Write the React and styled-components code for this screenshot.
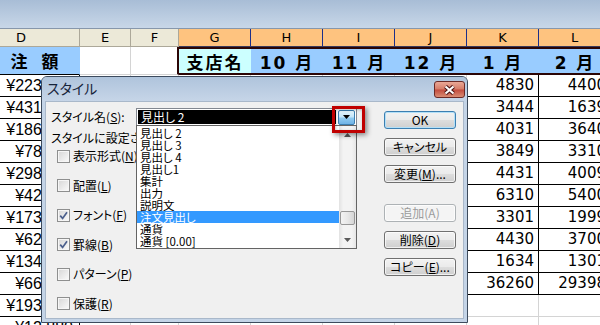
import React from 'react';
import styled, { createGlobalStyle } from 'styled-components';

const GlobalStyle = createGlobalStyle`
  html, body {
    margin: 0;
    padding: 0;
    background: #fff;
  }
  body {
    width: 600px;
    height: 325px;
    overflow: hidden;
  }
`;

const uiFont = `"Noto Sans CJK JP", sans-serif`;
const sheetFont = `"DejaVu Sans", "Noto Sans CJK JP", sans-serif`;

const columns = ['D', 'E', 'F', 'G', 'H', 'I', 'J', 'K', 'L'];

const orders = [
  '¥223,150', '¥431,800', '¥186,420', '¥78,360', '¥298,740', '¥42,580',
  '¥173,900', '¥62,210', '¥134,650', '¥66,470', '¥193,320', '¥12,880',
];
const january = [4830, 3444, 4031, 3849, 4431, 6310, 3301, 4430, 1634, 36260];
const february = [4400, 1639, 3640, 3310, 4009, 5400, 1999, 3700, 1301, 29398];

const styleNames = [
  '見出し 2', '見出し 3', '見出し 4', '見出し1', '集計', '出力',
  '説明文', '注文見出し', '通貨', '通貨 [0.00]',
];

const checks = [
  { label: '表示形式', key: 'N', on: false },
  { label: '配置', key: 'L', on: false },
  { label: 'フォント', key: 'F', on: true },
  { label: '罫線', key: 'B', on: true },
  { label: 'パターン', key: 'P', on: false },
  { label: '保護', key: 'R', on: false },
];

const tableLine = '1px solid #000';
const gridLine = '1px solid #d4d4d4';
const frameLine = '2px solid #2b0505';

export default function App() {
  return (
    <Root>
      <GlobalStyle />
      <TopBand />
      <Sheet>
        {columns.map((c, i) => (
          <ColHead key={c} $sel={i >= 3}>{c}</ColHead>
        ))}

        <TitleCell $bg="#99ccff" $spacing={4} $right="1px solid #99ccff" $bottom={tableLine}>
          受 注 額
        </TitleCell>
        <TitleCell $right={gridLine} $bottom={gridLine} />
        <TitleCell $right={frameLine} $bottom={gridLine} />
        <TitleCell $bg="#ccffff" $spacing={2} $top={frameLine} $bottom={frameLine}>
          支店名
        </TitleCell>
        {['10 月', '11 月', '12 月', '1 月', '2 月'].map((m) => (
          <TitleCell key={m} $bg="#99ccff" $spacing={2} $top={frameLine} $bottom={frameLine}>
            {m}
          </TitleCell>
        ))}

        {orders.map((o, r) => (
          <React.Fragment key={r}>
            <Num $yen $line={tableLine}>{o}</Num>
            {[0, 1, 2, 3, 4, 5].map((k) => (
              <Num key={k} $line={gridLine} />
            ))}
            <Num $line={r < 10 ? tableLine : gridLine}>{january[r]}</Num>
            <Num $line={r < 10 ? tableLine : gridLine}>{february[r]}</Num>
          </React.Fragment>
        ))}
      </Sheet>

      <Dialog>
        <TitleBar>
          <TitleText>スタイル</TitleText>
          <CloseButton>
            <svg width="13" height="10" viewBox="0 0 13 10">
              <path d="M2.5 1.5 L10.5 8.5 M10.5 1.5 L2.5 8.5" stroke="#4a1414" strokeWidth="4.2" />
              <path d="M2.5 1.5 L10.5 8.5 M10.5 1.5 L2.5 8.5" stroke="#fff" strokeWidth="2.2" />
            </svg>
          </CloseButton>
        </TitleBar>

        <Client>
          <LeftPane>
            <NameRow>
              <NameLabel>
                スタイル名(<U>S</U>):
              </NameLabel>
              <Combo>
                <ComboField>見出し 2</ComboField>
                <DropButton>
                  <svg width="7" height="4" viewBox="0 0 7 4">
                    <polygon points="0,0 7,0 3.5,4" fill="#000" />
                  </svg>
                  <Highlight />
                </DropButton>
                <ListBox>
                  <Items>
                    {styleNames.map((n) => (
                      <Item key={n} $sel={n === '注文見出し'}>{n}</Item>
                    ))}
                  </Items>
                  <ScrollBar>
                    <ScrollArrow>
                      <svg width="7" height="4" viewBox="0 0 7 4">
                        <polygon points="0,4 7,4 3.5,0" fill="#5a5a5a" />
                      </svg>
                    </ScrollArrow>
                    <Track>
                      <Thumb $offset={68} />
                    </Track>
                    <ScrollArrow>
                      <svg width="7" height="4" viewBox="0 0 7 4">
                        <polygon points="0,0 7,0 3.5,4" fill="#5a5a5a" />
                      </svg>
                    </ScrollArrow>
                  </ScrollBar>
                </ListBox>
              </Combo>
            </NameRow>

            <GroupLabel>スタイルに設定されている書式</GroupLabel>

            <CheckGroup>
              {checks.map((c) => (
                <CheckRow key={c.key}>
                  <Box>
                    {c.on && (
                      <svg width="9" height="9" viewBox="0 0 9 9">
                        <path d="M1.2 4.6 L3.6 7.4 L8 1.2" fill="none" stroke="#4b5f8c" strokeWidth="1.7" />
                      </svg>
                    )}
                  </Box>
                  <CheckLabel>
                    {c.label}(<U>{c.key}</U>)
                  </CheckLabel>
                </CheckRow>
              ))}
            </CheckGroup>
          </LeftPane>

          <ButtonCol>
            <Btn $default>OK</Btn>
            <Btn>キャンセル</Btn>
            <Btn>変更(<U>M</U>)...</Btn>
            <Btn $gap={12} $disabled>追加(A)</Btn>
            <Btn>削除(<U>D</U>)</Btn>
            <Btn>コピー(<U>E</U>)...</Btn>
          </ButtonCol>
        </Client>
      </Dialog>
    </Root>
  );
}

const Root = styled.div`
  position: relative;
  width: 600px;
  height: 325px;
  overflow: hidden;
  background: #fff;
`;

const TopBand = styled.div`
  height: 28px;
  background: linear-gradient(#a8bdd6, #c8d7e8);
  border-bottom: 1px solid #8797ab;
`;

const Sheet = styled.div`
  display: grid;
  grid-template-columns: 117px 51px 48px repeat(6, 72px);
  margin-left: -37px;
  width: 648px;
`;

const ColHead = styled.div`
  box-sizing: border-box;
  height: 18px;
  font: 13px/17px ${sheetFont};
  text-align: center;
  color: #000;
  background: ${(p) => (p.$sel ? '#fec37f' : '#ece9d8')};
  border-right: 1px solid ${(p) => (p.$sel ? '#1c2f8a' : '#aca899')};
  border-bottom: 1px solid ${(p) => (p.$sel ? '#3a3a5a' : '#aca899')};
`;

const TitleCell = styled.div`
  box-sizing: border-box;
  height: 28px;
  display: flex;
  align-items: center;
  justify-content: center;
  background: ${(p) => p.$bg || '#fff'};
  border-top: ${(p) => p.$top || 'none'};
  border-right: ${(p) => p.$right || 'none'};
  border-bottom: ${(p) => p.$bottom || 'none'};
  font: bold 17px ${sheetFont};
  letter-spacing: ${(p) => p.$spacing || 0}px;
  white-space: pre;
  color: #000;
`;

const Num = styled.div`
  box-sizing: border-box;
  height: 22px;
  border-right: ${(p) => p.$line};
  border-bottom: ${(p) => p.$line};
  text-align: right;
  padding-right: ${(p) => (p.$yen ? 6 : 4)}px;
  font: ${(p) => (p.$yen ? `16px/21px "Liberation Sans", sans-serif` : `15px/21px ${sheetFont}`)};
  color: #000;
  white-space: nowrap;
  overflow: hidden;
`;

const Dialog = styled.div`
  position: absolute;
  left: 41px;
  top: 76px;
  width: 427px;
  height: 247px;
  box-sizing: border-box;
  display: flex;
  flex-direction: column;
  padding: 0 3px 3px;
  border: 1px solid #3d4b5d;
  border-radius: 6px 6px 0 0;
  background: #c4d4e7;
  font-family: ${uiFont};
  font-feature-settings: "palt";
`;

const TitleBar = styled.div`
  height: 24px;
  margin: 0 -3px;
  padding: 0 2px 0 5px;
  display: flex;
  align-items: center;
  justify-content: space-between;
  border-radius: 5px 5px 0 0;
  background: linear-gradient(#afc4dc, #c6d5e8);
`;

const TitleText = styled.span`
  font-size: 14px;
  color: #17243a;
  padding-bottom: 2px;
`;

const CloseButton = styled.div`
  box-sizing: border-box;
  width: 31px;
  height: 17px;
  margin-top: 1px;
  display: flex;
  align-items: center;
  justify-content: center;
  border: 1px solid #6b2a26;
  border-radius: 3px;
  background: linear-gradient(#eaa897 0%, #d57c68 48%, #c24b3d 52%, #d98c73 100%);
`;

const Client = styled.div`
  flex: 1;
  display: flex;
  padding: 6px 7px 0 5px;
  border: 1px solid #a9b8ca;
  background: #f0f0f0;
  font-size: 12px;
  color: #000;
`;

const LeftPane = styled.div`
  flex: 1;
  display: flex;
  flex-direction: column;
`;

const NameRow = styled.div`
  display: flex;
  align-items: center;
  height: 18px;
`;

const NameLabel = styled.span`
  width: 85px;
  line-height: 16px;
`;

const U = styled.span`
  text-decoration: underline;
`;

const Combo = styled.div`
  position: relative;
  box-sizing: border-box;
  width: 221px;
  height: 18px;
  display: flex;
  align-items: center;
  padding: 1px;
  border: 1px solid #828790;
  background: #fff;
`;

const ComboField = styled.div`
  flex: 1;
  height: 14px;
  margin-right: 2px;
  padding-left: 3px;
  background: #000;
  color: #fff;
  line-height: 14px;
  white-space: pre;
`;

const DropButton = styled.div`
  position: relative;
  box-sizing: border-box;
  width: 17px;
  height: 15px;
  display: flex;
  align-items: center;
  justify-content: center;
  border: 1px solid #3c7fb1;
  border-radius: 2px;
  background: linear-gradient(#e3f4fc 0%, #c4e5f8 45%, #8fcaf0 55%, #6fb3e6 100%);
`;

const Highlight = styled.div`
  position: absolute;
  left: -7px;
  top: -5px;
  width: 33px;
  height: 27px;
  box-sizing: border-box;
  border: 3px solid #c00000;
  box-shadow: 2px 2px 5px rgba(0, 0, 0, 0.45), inset 1px 1px 3px rgba(0, 0, 0, 0.25);
  z-index: 2;
`;

const ListBox = styled.div`
  position: absolute;
  left: -1px;
  top: 16px;
  width: 221px;
  height: 124px;
  box-sizing: border-box;
  display: flex;
  border: 1px solid #646464;
  background: #fff;
  z-index: 1;
`;

const Items = styled.div`
  flex: 1;
  padding-top: 1px;
  overflow: hidden;
`;

const Item = styled.div`
  height: 12px;
  line-height: 12px;
  font-size: 11.5px;
  padding-left: 3px;
  white-space: pre;
  background: ${(p) => (p.$sel ? '#3399ff' : 'transparent')};
  color: ${(p) => (p.$sel ? '#fff' : '#000')};
`;

const ScrollBar = styled.div`
  width: 17px;
  display: flex;
  flex-direction: column;
  background: linear-gradient(90deg, #e2e2e2, #f3f3f3 25%, #f3f3f3 75%, #e6e6e6);
`;

const ScrollArrow = styled.div`
  height: 17px;
  display: flex;
  align-items: center;
  justify-content: center;
`;

const Track = styled.div`
  position: relative;
  flex: 1;
`;

const Thumb = styled.div`
  position: absolute;
  left: 1px;
  right: 1px;
  top: ${(p) => p.$offset}px;
  height: 14px;
  box-sizing: border-box;
  border: 1px solid #979797;
  border-radius: 2px;
  background: linear-gradient(90deg, #f3f3f3, #e8e8e8 50%, #d6d6d6);
`;

const GroupLabel = styled.div`
  margin-top: 4px;
  line-height: 16px;
  white-space: nowrap;
`;

const CheckGroup = styled.div`
  display: flex;
  flex-direction: column;
  gap: 13.5px;
  margin-top: 2px;
  padding-left: 6px;
`;

const CheckRow = styled.div`
  display: flex;
  align-items: center;
  height: 16px;
`;

const Box = styled.span`
  flex: none;
  width: 13px;
  height: 13px;
  box-sizing: border-box;
  display: flex;
  align-items: center;
  justify-content: center;
  border: 1px solid #8e8f8f;
  background: linear-gradient(135deg, #d6d6d6, #fbfbfb);
  box-shadow: inset 0 0 0 1px #f6f6f6;
`;

const CheckLabel = styled.span`
  margin-left: 3px;
  line-height: 16px;
  white-space: nowrap;
`;

const ButtonCol = styled.div`
  width: 72px;
  display: flex;
  flex-direction: column;
  gap: 9px;
  padding-top: 3px;
`;

const Btn = styled.div`
  box-sizing: border-box;
  height: 18px;
  margin-top: ${(p) => p.$gap || 0}px;
  border: 1px solid ${(p) => (p.$disabled ? '#adb2b5' : p.$default ? '#3c7fb1' : '#707070')};
  border-radius: 3px;
  background: ${(p) =>
    p.$disabled
      ? '#f4f4f4'
      : 'linear-gradient(#f2f2f2 0%, #ebebeb 48%, #dddddd 52%, #cfcfcf 100%)'};
  box-shadow: inset 0 0 0 1px ${(p) => (p.$default ? '#b3e0f8' : 'rgba(255,255,255,0.7)')};
  color: ${(p) => (p.$disabled ? '#9c9c9c' : '#000')};
  font-size: 12px;
  line-height: 16px;
  text-align: center;
  white-space: nowrap;
`;
